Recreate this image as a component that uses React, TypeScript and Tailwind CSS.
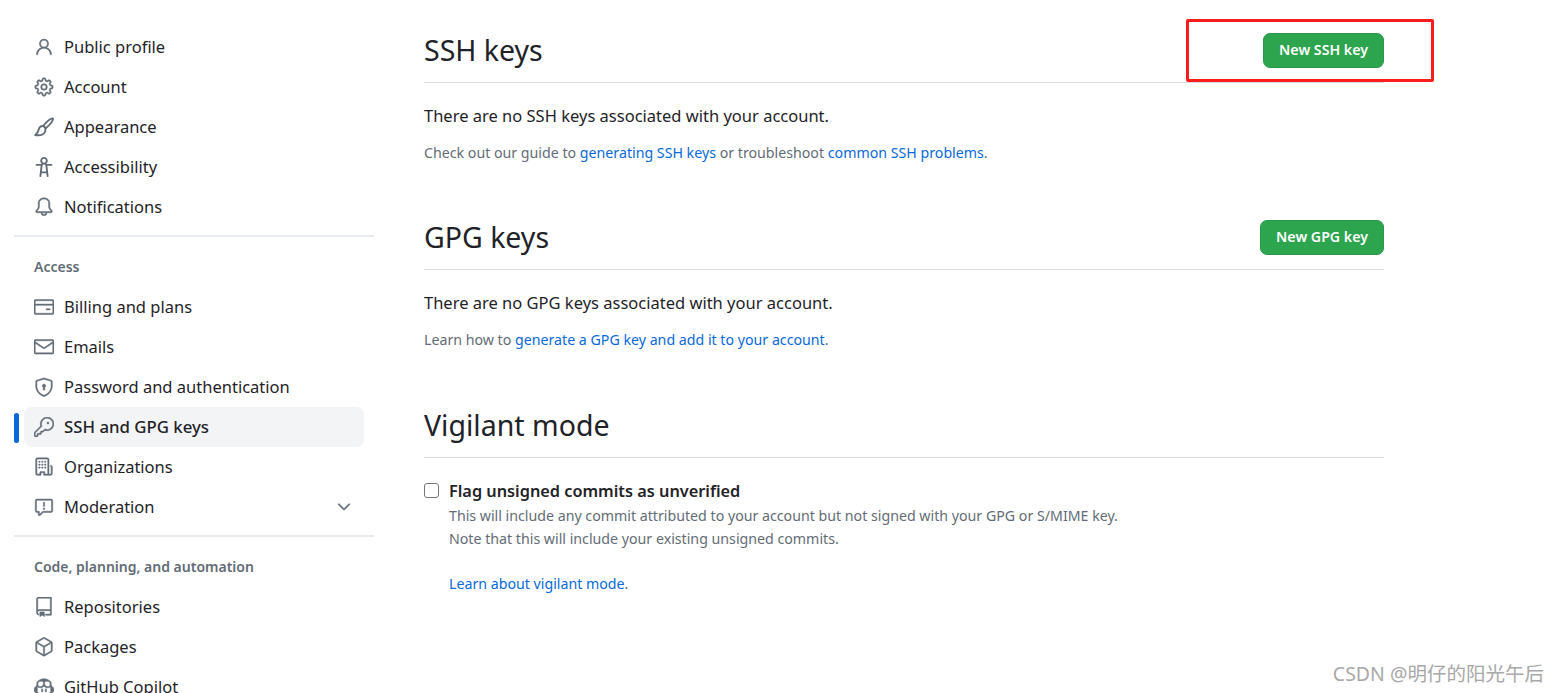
import React from "react";
import { GoPerson, GoGear, GoBell, GoCreditCard, GoMail, GoShieldLock, GoKey, GoOrganization, GoReport, GoChevronDown, GoRepo, GoPackage, GoCopilot } from "react-icons/go";

type IconProps = { size?: number; className?: string };
type Item = { label: string; Icon: React.ComponentType<IconProps>; active?: boolean; chevron?: boolean };

function GoPaintbrush({ size, className }: IconProps) {
  return (
    <svg width={size} height={size} viewBox="0 0 16 16" fill="none" stroke="currentColor" strokeLinejoin="round" strokeLinecap="round" className={className}>
      <path strokeWidth="1.5" d="M14.6 1.1c-1.6.3-5 3.3-7.2 5.9l2 2c2.5-2.1 5.4-5.6 5.8-7.1.1-.5-.2-.9-.6-.8Z" />
      <path strokeWidth="1.5" d="M7.2 7.2C5.2 7.3 4 8.5 3.7 10.2c-.2 1.3-.9 2.6-2.7 4.3 3.2.4 6.6-.3 7.7-2.4.5-1 .5-2 .3-2.9" />
    </svg>
  );
}

function GoAccessibility({ size, className }: IconProps) {
  return (
    <svg width={size} height={size} viewBox="0 0 16 16" fill="currentColor" className={className}>
      <path d="M9.923 5.302c.063.063.122.129.178.198H14A.75.75 0 0 1 14 7h-3.3l.578 5.163.362 2.997a.75.75 0 0 1-1.49.18L9.868 13H6.132l-.282 2.34a.75.75 0 0 1-1.49-.18l.362-2.997L5.3 7H2a.75.75 0 0 1 0-1.5h3.9a2.54 2.54 0 0 1 .176-.198 3 3 0 1 1 3.847 0ZM9.2 7.073h-.001a1.206 1.206 0 0 0-2.398 0L6.305 11.5h3.39ZM9.5 3a1.5 1.5 0 1 0-3.001.001A1.5 1.5 0 0 0 9.5 3Z" />
    </svg>
  );
}

function Row({ label, Icon, active, chevron }: Item) {
  return (
    <div className="relative h-10 shrink-0 pl-[10px]">
      {active && <span className="absolute left-0 top-[6px] h-[30px] w-[5px] rounded-full bg-[#0969da]" />}
      <div className={`flex h-10 w-[340px] items-center rounded-lg pl-[10px] pr-[10px] text-[#1f2328] ${active ? "bg-[#f3f4f6] text-[16.8px] font-medium" : "text-[16.5px]"}`}>
        <Icon size={20} className="shrink-0 stroke-[0.6] text-[#636c76]" />
        <span className="ml-[10px] leading-10">{label}</span>
        {chevron && <GoChevronDown size={20} className="ml-auto stroke-[0.6] text-[#636c76]" />}
      </div>
    </div>
  );
}

function Divider() {
  return <div className="my-2 h-[2px] w-[360px] shrink-0 bg-[#e8ebef]" />;
}

function Heading({ children }: { children: React.ReactNode }) {
  return <div className="flex h-[42px] shrink-0 items-center pl-5 text-[14px] font-semibold text-[#636c76]">{children}</div>;
}

function Section({ title, button, mtClass }: { title: string; button?: string; mtClass?: string }) {
  return (
    <div className={`flex h-[65px] items-center justify-between border-b border-[#d8dee4] ${mtClass ?? ""}`}>
      <h2 className="text-[28.5px] leading-none font-normal text-[#1f2328]">{title}</h2>
      {button && (
        <button className="flex h-[35px] items-center rounded-[7px] border border-[#2c974b] bg-[#2da44e] px-[15px] text-[14.2px] font-semibold text-white">
          {button}
        </button>
      )}
    </div>
  );
}

const A = ({ children }: { children: React.ReactNode }) => <a className="text-[#0969da]">{children}</a>;

export default function App() {
  return (
    <div className="relative flex h-[693px] w-[1559px] overflow-hidden bg-white font-['Noto_Sans','Noto_Sans_CJK_SC',sans-serif]">
      <nav className="ml-[14px] flex w-[360px] shrink-0 flex-col pt-[27px]">
        <Row label="Public profile" Icon={GoPerson} />
        <Row label="Account" Icon={GoGear} />
        <Row label="Appearance" Icon={GoPaintbrush} />
        <Row label="Accessibility" Icon={GoAccessibility} />
        <Row label="Notifications" Icon={GoBell} />
        <Divider />
        <Heading>Access</Heading>
        <Row label="Billing and plans" Icon={GoCreditCard} />
        <Row label="Emails" Icon={GoMail} />
        <Row label="Password and authentication" Icon={GoShieldLock} />
        <Row label="SSH and GPG keys" Icon={GoKey} active />
        <Row label="Organizations" Icon={GoOrganization} />
        <Row label="Moderation" Icon={GoReport} chevron />
        <Divider />
        <Heading>Code, planning, and automation</Heading>
        <Row label="Repositories" Icon={GoRepo} />
        <Row label="Packages" Icon={GoPackage} />
        <Row label="GitHub Copilot" Icon={GoCopilot} />
      </nav>

      <main className="ml-[50px] w-[960px] shrink-0 pt-[18px]">
        <Section title="SSH keys" button="New SSH key" />
        <p className="mt-[21px] text-[16.5px] leading-[24px] text-[#1f2328]">There are no SSH keys associated with your account.</p>
        <p className="mt-[15px] text-[14.2px] leading-[20px] text-[#636c76]">
          Check out our guide to <A>generating SSH keys</A> or troubleshoot <A>common SSH problems</A>.
        </p>

        <Section title="GPG keys" button="New GPG key" mtClass="mt-[42px]" />
        <p className="mt-[21px] text-[16.5px] leading-[24px] text-[#1f2328]">There are no GPG keys associated with your account.</p>
        <p className="mt-[15px] text-[14.2px] leading-[20px] text-[#636c76]">
          Learn how to <A>generate a GPG key and add it to your account</A>.
        </p>

        <Section title="Vigilant mode" mtClass="mt-[43px]" />
        <div className="mt-[20px] flex">
          <span className="mt-[5px] h-[15px] w-[15px] shrink-0 rounded-[3px] border border-[#767676] bg-white" />
          <div className="ml-[10px]">
            <div className="text-[16.3px] leading-[26px] font-semibold text-[#1f2328]">Flag unsigned commits as unverified</div>
            <div className="mt-[1px] text-[14.2px] leading-[22.5px] text-[#636c76]">
              <p>This will include any commit attributed to your account but not signed with your GPG or S/MIME key.</p>
              <p>Note that this will include your existing unsigned commits.</p>
              <p className="mt-[23px]"><A>Learn about vigilant mode</A>.</p>
            </div>
          </div>
        </div>
      </main>

      <div className="absolute left-[1186px] top-[19px] h-[63px] w-[248px] rounded-[2px] border-[3px] border-[#fb1d1d]" />
      <div className="absolute right-[15px] top-[662px] text-[19.5px] leading-6 text-[#a8a8a8]">CSDN @明仔的阳光午后</div>
    </div>
  );
}
